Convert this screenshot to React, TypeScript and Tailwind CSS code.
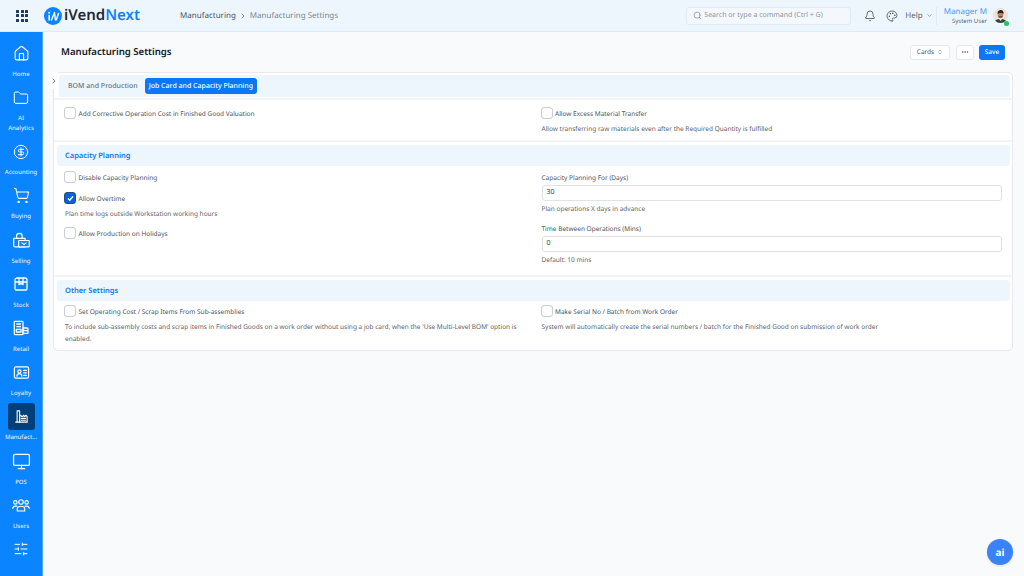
import { Bell, ChevronDown, ChevronRight, ChevronsUpDown, CircleDollarSign, Ellipsis, Folder, Home, Monitor, Palette, Search, ShoppingCart, SlidersHorizontal } from "lucide-react";
import type { ReactNode } from "react";

function SellingIcon() {
    return (
        <svg width="17" height="17" viewBox="0 0 24 24" fill="none" stroke="currentColor" strokeWidth="1.7" strokeLinejoin="round">
            <path d="M1 9h16v12H3a2 2 0 0 1-2-2z" />
            <path d="M5 9V6a4 4 0 0 1 8 0v3" />
            <rect x="8" y="12" width="15" height="9" rx="1" fill="#0a84ff" />
            <path d="M12 15l3.500 2.500L19 15" />
        </svg>
    );
}

function StockIcon() {
    return (
        <svg width="16" height="16" viewBox="0 0 24 24" fill="none" stroke="currentColor" strokeWidth="1.9" strokeLinejoin="round">
            <path d="M6 3h12a3 3 0 0 1 3 3v13a2 2 0 0 1-2 2H5a2 2 0 0 1-2-2V6a3 3 0 0 1 3-3z" />
            <path d="M3 9h18M9 3v6M15 3v6M9 9v4l3-1.500 3 1.500V9" />
        </svg>
    );
}

function RetailIcon() {
    return (
        <svg width="16" height="16" viewBox="0 0 24 24" fill="none" stroke="currentColor" strokeWidth="1.9" strokeLinejoin="round">
            <rect x="2" y="2" width="13" height="20" rx="1" />
            <path d="M5 6h7M5 10h7M5 14h7v4H5z" />
            <path d="M15 12h6a1.500 1.500 0 0 1 1.500 1.500V20H15zM15 16h7.500" />
        </svg>
    );
}

function LoyaltyIcon() {
    return (
        <svg width="17" height="17" viewBox="0 0 24 24" fill="none" stroke="currentColor" strokeWidth="1.7" strokeLinejoin="round" strokeLinecap="round">
            <rect x="2" y="4" width="20" height="16" rx="2" />
            <circle cx="9" cy="10.5" r="2.2" />
            <path d="M5.5 17c.4-2.4 1.800-3.500 3.500-3.500s3.100 1.100 3.500 3.500M15 9h4M15 12.500h4M15 16h4" />
        </svg>
    );
}

function FactoryIcon() {
    return (
        <svg width="15" height="15" viewBox="0 0 24 24" fill="none" stroke="currentColor" strokeWidth="1.7" strokeLinejoin="round">
            <path d="M5 21V3h4v18" />
            <path d="M2 21h20M9 10h2l1 2h2l1-2 2 2 2-2 2 2v9H9z" />
            <path d="M11 15h8M11 18h8" />
        </svg>
    );
}

function UsersIcon() {
    return (
        <svg width="18" height="18" viewBox="0 0 24 24" fill="none" stroke="currentColor" strokeWidth="1.5" strokeLinecap="round" strokeLinejoin="round">
            <circle cx="12" cy="8" r="3" />
            <circle cx="4.500" cy="8.500" r="2.300" />
            <circle cx="19.500" cy="8.500" r="2.300" />
            <path d="M7 20v-3a3 3 0 0 1 3-3h4a3 3 0 0 1 3 3v3z" />
            <path d="M1 16.500a3.500 3.500 0 0 1 3.500-3h2M23 16.500a3.500 3.500 0 0 0-3.500-3h-2" />
        </svg>
    );
}

function NavItem({ icon, label, tall, active }: { icon: ReactNode; label?: string; tall?: boolean; active?: boolean }) {
    return (
        <div className={tall ? "flex h-[54px] shrink-0 flex-col items-center" : "flex h-[44.200px] shrink-0 flex-col items-center"}>
            <div className={active ? "flex h-[27px] w-[27px] shrink-0 items-center justify-center rounded-[3px] bg-[#003f78]" : "flex h-[27px] w-[27px] shrink-0 items-center justify-center"}>
                {icon}
            </div>
            <div className={tall ? "mt-[2px] w-full px-[7px] text-center text-[6px] leading-[10px] font-medium text-[#dbeafe]" : "mt-px w-full text-center text-[6px] leading-[12px] font-medium text-[#dbeafe]"}>
                {label}
            </div>
        </div>
    );
}

function Sidebar() {
    return (
        <aside className="flex w-[43px] shrink-0 flex-col overflow-hidden border-r border-[#4ea4f5] bg-[#0a84ff] pt-[8px] text-white">
            <NavItem icon={<Home size={17} strokeWidth={1.5} />} label="Home" />
            <NavItem icon={<Folder size={16} strokeWidth={1.5} />} label="AI Analytics" tall />
            <NavItem icon={<CircleDollarSign size={16} strokeWidth={1.5} />} label="Accounting" />
            <NavItem icon={<ShoppingCart size={17} strokeWidth={1.5} />} label="Buying" />
            <NavItem icon={<SellingIcon />} label="Selling" />
            <NavItem icon={<StockIcon />} label="Stock" />
            <NavItem icon={<RetailIcon />} label="Retail" />
            <NavItem icon={<LoyaltyIcon />} label="Loyalty" />
            <NavItem icon={<FactoryIcon />} label="Manufact..." active />
            <NavItem icon={<Monitor size={19} strokeWidth={1.6} />} label="POS" />
            <NavItem icon={<UsersIcon />} label="Users" />
            <NavItem icon={<SlidersHorizontal size={16} strokeWidth={1.5} />} />
        </aside>
    );
}

function Logo() {
    return (
        <svg width="18" height="18" viewBox="0 0 18 18" className="shrink-0">
            <circle cx="9" cy="9" r="9" fill="#0a84ff" />
            <path d="M5.200 8.500v4.500" stroke="#fff" strokeWidth="1.600" strokeLinecap="round" />
            <circle cx="5.200" cy="5.800" r="1" fill="#fff" />
            <path d="M7.500 13l3-7.500.8 7c.1.800.800.800 1.100 0L14.500 6.500" stroke="#fff" strokeWidth="1.400" fill="none" strokeLinecap="round" strokeLinejoin="round" />
        </svg>
    );
}

function Avatar() {
    return (
        <div className="relative h-[15px] w-[15px] shrink-0">
            <svg width="15" height="15" viewBox="0 0 15 15" className="rounded-full">
                <rect width="15" height="15" fill="#e9e3db" />
                <path d="M1 15c.5-3 3-4 6.500-4S13.500 12 14 15z" fill="#3a3f3c" />
                <path d="M6 11l1.500 2L9 11z" fill="#e8eef0" />
                <ellipse cx="7.500" cy="6.800" rx="2.800" ry="3.500" fill="#b98563" />
                <path d="M4.500 6C4.300 3 6 2 7.800 2s3 1.200 2.800 4C9.500 4.800 6 4.800 4.500 6z" fill="#2d211b" />
                <path d="M5.800 8.300h3.400v.9H5.800z" fill="#54392c" />
            </svg>
            <span className="absolute -right-px -bottom-[3px] h-[5px] w-[5px] rounded-full bg-[#22c55e]" />
        </div>
    );
}

function Topbar() {
    return (
        <header className="flex h-[32px] shrink-0 items-center border-b border-[#dceaf7] bg-[#eef6fd] pr-[16px]">
            <div className="ml-[16px] grid w-[12px] grid-cols-3 gap-[1.500px]">
                {[1, 2, 3, 4, 5, 6, 7, 8, 9].map((d) => (
                    <span key={d} className="h-[3px] w-[3px] rounded-[0.5px] bg-[#1e3a5f]" />
                ))}
            </div>
            <div className="ml-[16px] flex items-center gap-[2px]">
                <Logo />
                <span className="text-[15px] font-semibold text-[#1f2937]">
                    iVend<span className="text-[#0a84ff]">Next</span>
                </span>
            </div>
            <div className="ml-[40px] flex items-center pt-px text-[8px] text-[#4b5563]">
                <span>Manufacturing</span>
                <ChevronRight size={8} className="mx-[3px]" />
                <span className="text-[#7b8794]">Manufacturing Settings</span>
            </div>
            <div className="ml-auto flex h-[18px] w-[165px] items-center gap-[2px] rounded-[3px] border border-[#dfeaf5] bg-[#f4f8fc] px-[6px] text-[7px] text-[#8a94a3]">
                <Search size={9} strokeWidth={1.500} className="text-[#6b7280]" />
                <span className="pt-[2px]">Search or type a command (Ctrl + G)</span>
            </div>
            <Bell size={12} strokeWidth={1.500} className="ml-[12.500px] text-[#374151]" />
            <Palette size={12} strokeWidth={1.500} className="ml-[10.500px] text-[#374151]" />
            <div className="ml-[7px] flex items-center gap-[3px] text-[8px] text-[#5b6472]">
                <span className="pt-px">Help</span>
                <ChevronDown size={7} />
            </div>
            <div className="ml-[3.500px] h-[18px] w-px bg-[#e0e9f2]" />
            <div className="ml-[6.500px] flex flex-col items-end leading-none">
                <span className="pt-px text-[8px] text-[#4f97e8]">Manager M</span>
                <span className="mt-[2px] text-[6px] text-[#5b6472]">System User</span>
            </div>
            <div className="ml-[6px]">
                <Avatar />
            </div>
        </header>
    );
}

function Check({ label, checked }: { label: string; checked?: boolean }) {
    return (
        <div className="flex h-[12px] items-center gap-[3.500px]">
            <span
                className={
                    checked
                        ? "flex h-[10px] w-[10px] shrink-0 items-center justify-center rounded-[2.500px] bg-[#0f62d6] ring-1 ring-[#1d4e89]"
                        : "h-[10px] w-[10px] shrink-0 rounded-[2.500px] bg-white ring-1 ring-[#c9ced6]"
                }
            >
                {checked && (
                    <svg width="7" height="7" viewBox="0 0 8 8" fill="none" stroke="#fff" strokeWidth="1.400" strokeLinecap="round" strokeLinejoin="round">
                        <path d="M1.500 4.300L3.200 6 6.500 2" />
                    </svg>
                )}
            </span>
            <span className="pt-px text-[6.500px] leading-[11px] text-[#4b5563]">{label}</span>
        </div>
    );
}

function Help({ children }: { children: ReactNode }) {
    return <p className="text-[6.500px] leading-[12px] text-[#5f636a]">{children}</p>;
}

function Field({ label, value, help }: { label: string; value: string; help: string }) {
    return (
        <div>
            <div className="pt-[2px] text-[6.500px] leading-[9px] text-[#4b5563]">{label}</div>
            <div className="mt-[3px] flex h-[16px] items-center rounded-[3px] border border-[#dfe2e6] bg-white px-[4px] text-[7px] text-[#374151]">
                {value}
            </div>
            <div className="mt-[2px]">
                <Help>{help}</Help>
            </div>
        </div>
    );
}

function SectionHead({ title }: { title: string }) {
    return (
        <div className="mr-[2px] ml-[3px] flex h-[21px] items-center rounded-[3px] bg-[#eef6fd] pt-[2px] pl-[8px] text-[7.500px] font-semibold text-[#0a78e8]">
            {title}
        </div>
    );
}

export default function App() {
    return (
        <div className="flex h-screen w-screen flex-col overflow-hidden bg-[#f9fafc] font-['Noto_Sans',sans-serif] antialiased opacity-[0.999] [text-rendering:geometricPrecision]">
            <Topbar />
            <div className="flex min-h-0 flex-1">
                <Sidebar />
                <main className="min-w-0 flex-1 pr-[11px] pl-[10px]">
                    <div className="flex h-[40px] items-center pr-[8px] pl-[8px]">
                        <h1 className="pt-px text-[9.600px] font-semibold text-[#111827]">Manufacturing Settings</h1>
                        <div className="ml-auto flex items-center gap-[5.500px]">
                            <div className="flex h-[15px] w-[40px] items-center justify-center gap-[3px] rounded-[3px] border border-[#e5e7eb] bg-white text-[6.500px] text-[#4b5563]">
                                Cards
                                <ChevronsUpDown size={6} />
                            </div>
                            <div className="flex h-[15px] w-[18px] items-center justify-center rounded-[3px] border border-[#e5e7eb] bg-white text-[#4b5563]">
                                <Ellipsis size={8} />
                            </div>
                            <div className="flex h-[15px] w-[26px] items-center justify-center rounded-[3px] bg-[#0a78f5] text-[6.500px] font-medium text-white">
                                Save
                            </div>
                        </div>
                    </div>
                    <section className="relative rounded-[5px] border border-[#e7e9ed] bg-white">
                        <div className="absolute -top-px -left-[5px] flex h-[17px] w-[10px] items-center justify-center rounded-[2px] bg-white text-[#374151]">
                            <ChevronRight size={8} strokeWidth={2} />
                        </div>
                        <div className="border-b-2 border-[#f3f4f6] pt-[2px] pb-[1px]">
                            <div className="mr-[2px] ml-[5px] flex h-[22px] items-center rounded-[3px] bg-[#eef6fd]">
                                <span className="pt-[2px] pr-[7px] pl-[9px] text-[7px] font-medium text-[#6b7280]">BOM and Production</span>
                                <span className="flex h-[16px] items-center rounded-[3px] bg-[#0a78f5] px-[4px] pt-[2px] text-[7px] font-medium text-white">
                                    Job Card and Capacity Planning
                                </span>
                            </div>
                        </div>
                        <div className="grid h-[42px] grid-cols-2 border-b-2 border-[#f3f4f6] pt-[7px] pl-[11px]">
                            <Check label="Add Corrective Operation Cost in Finished Good Valuation" />
                            <div className="pl-[3px]">
                                <Check label="Allow Excess Material Transfer" />
                                <div className="mt-[4px]">
                                    <Help>Allow transferring raw materials even after the Required Quantity is fulfilled</Help>
                                </div>
                            </div>
                        </div>
                        <div className="border-b-2 border-[#f3f4f6] pt-[3px] pb-[9px]">
                            <SectionHead title="Capacity Planning" />
                            <div className="mt-[5px] grid grid-cols-2 pl-[11px]">
                                <div className="flex flex-col">
                                    <Check label="Disable Capacity Planning" />
                                    <div className="mt-[9px]">
                                        <Check label="Allow Overtime" checked />
                                    </div>
                                    <div className="mt-[4px]">
                                        <Help>Plan time logs outside Workstation working hours</Help>
                                    </div>
                                    <div className="mt-[7px]">
                                        <Check label="Allow Production on Holidays" />
                                    </div>
                                </div>
                                <div className="pr-[10px] pl-[3px]">
                                    <Field label="Capacity Planning For (Days)" value="30" help="Plan operations X days in advance" />
                                    <div className="mt-[7px]">
                                        <Field label="Time Between Operations (Mins)" value="0" help="Default: 10 mins" />
                                    </div>
                                </div>
                            </div>
                        </div>
                        <div className="pt-[3px] pb-[5px]">
                            <SectionHead title="Other Settings" />
                            <div className="mt-[4px] grid grid-cols-2 pl-[11px]">
                                <div>
                                    <Check label="Set Operating Cost / Scrap Items From Sub-assemblies" />
                                    <div className="mt-[4px] pr-[10px]">
                                        <Help>To include sub-assembly costs and scrap items in Finished Goods on a work order without using a job card, when the 'Use Multi-Level BOM' option is enabled.</Help>
                                    </div>
                                </div>
                                <div className="pl-[3px]">
                                    <Check label="Make Serial No / Batch from Work Order" />
                                    <div className="mt-[4px]">
                                        <Help>System will automatically create the serial numbers / batch for the Finished Good on submission of work order</Help>
                                    </div>
                                </div>
                            </div>
                        </div>
                    </section>
                </main>
            </div>
            <div className="absolute right-[11px] bottom-[11px] flex h-[26px] w-[26px] items-center justify-center rounded-full bg-[#3b82f6] text-[10px] font-bold text-white shadow">
                ai
            </div>
        </div>
    );
}
